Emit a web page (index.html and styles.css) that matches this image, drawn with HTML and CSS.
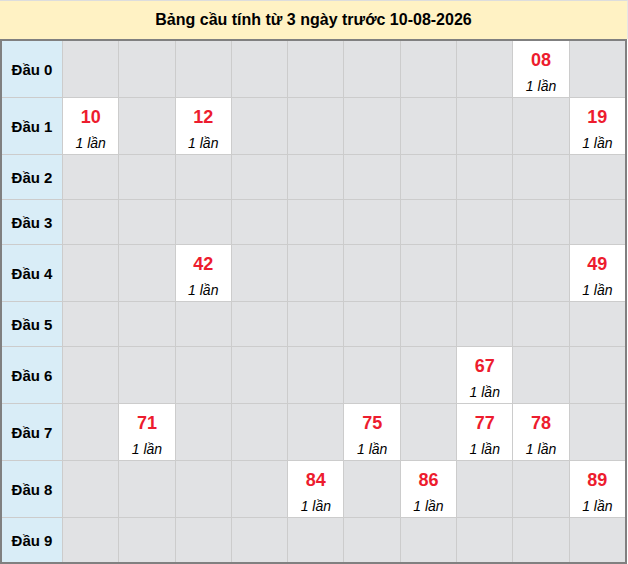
FILE: index.html
```html
<!DOCTYPE html>
<html lang="vi">
<head>
<meta charset="utf-8">
<title>Bảng cầu</title>
<link rel="stylesheet" href="styles.css">
</head>
<body>
<div class="header">Bảng cầu tính từ 3 ngày trước 10-08-2026</div>
<div class="grid">
  <div class="label tall">Đầu 0</div>
  <div class="c"></div><div class="c"></div><div class="c"></div><div class="c"></div><div class="c"></div><div class="c"></div><div class="c"></div><div class="c"></div>
  <div class="c hit"><span class="num">08</span><span class="cnt">1 lần</span></div>
  <div class="c"></div>

  <div class="label tall">Đầu 1</div>
  <div class="c hit"><span class="num">10</span><span class="cnt">1 lần</span></div>
  <div class="c"></div>
  <div class="c hit"><span class="num">12</span><span class="cnt">1 lần</span></div>
  <div class="c"></div><div class="c"></div><div class="c"></div><div class="c"></div><div class="c"></div><div class="c"></div>
  <div class="c hit"><span class="num">19</span><span class="cnt">1 lần</span></div>

  <div class="label short">Đầu 2</div>
  <div class="c"></div><div class="c"></div><div class="c"></div><div class="c"></div><div class="c"></div><div class="c"></div><div class="c"></div><div class="c"></div><div class="c"></div><div class="c"></div>

  <div class="label short">Đầu 3</div>
  <div class="c"></div><div class="c"></div><div class="c"></div><div class="c"></div><div class="c"></div><div class="c"></div><div class="c"></div><div class="c"></div><div class="c"></div><div class="c"></div>

  <div class="label tall">Đầu 4</div>
  <div class="c"></div><div class="c"></div>
  <div class="c hit"><span class="num">42</span><span class="cnt">1 lần</span></div>
  <div class="c"></div><div class="c"></div><div class="c"></div><div class="c"></div><div class="c"></div><div class="c"></div>
  <div class="c hit"><span class="num">49</span><span class="cnt">1 lần</span></div>

  <div class="label short">Đầu 5</div>
  <div class="c"></div><div class="c"></div><div class="c"></div><div class="c"></div><div class="c"></div><div class="c"></div><div class="c"></div><div class="c"></div><div class="c"></div><div class="c"></div>

  <div class="label tall">Đầu 6</div>
  <div class="c"></div><div class="c"></div><div class="c"></div><div class="c"></div><div class="c"></div><div class="c"></div><div class="c"></div>
  <div class="c hit"><span class="num">67</span><span class="cnt">1 lần</span></div>
  <div class="c"></div><div class="c"></div>

  <div class="label tall">Đầu 7</div>
  <div class="c"></div>
  <div class="c hit"><span class="num">71</span><span class="cnt">1 lần</span></div>
  <div class="c"></div><div class="c"></div><div class="c"></div>
  <div class="c hit"><span class="num">75</span><span class="cnt">1 lần</span></div>
  <div class="c"></div>
  <div class="c hit"><span class="num">77</span><span class="cnt">1 lần</span></div>
  <div class="c hit"><span class="num">78</span><span class="cnt">1 lần</span></div>
  <div class="c"></div>

  <div class="label tall">Đầu 8</div>
  <div class="c"></div><div class="c"></div><div class="c"></div><div class="c"></div>
  <div class="c hit"><span class="num">84</span><span class="cnt">1 lần</span></div>
  <div class="c"></div>
  <div class="c hit"><span class="num">86</span><span class="cnt">1 lần</span></div>
  <div class="c"></div><div class="c"></div>
  <div class="c hit"><span class="num">89</span><span class="cnt">1 lần</span></div>

  <div class="label short">Đầu 9</div>
  <div class="c"></div><div class="c"></div><div class="c"></div><div class="c"></div><div class="c"></div><div class="c"></div><div class="c"></div><div class="c"></div><div class="c"></div><div class="c"></div>
</div>
</body>
</html>
```
FILE: styles.css
```css
html, body {
  margin: 0;
  padding: 0;
  background: #ffffff;
}
body {
  font-family: "Liberation Sans", Arial, sans-serif;
  color: #000;
  width: 628px;
}
.header {
  height: 38px;
  border-top: 1px solid #dddddd;
  background: #fff2c4;
  font-weight: bold;
  font-size: 16px;
  line-height: 38px;
  text-align: center;
  width: 627px;
  border-right: 1px solid #e6e6e6;
}
.grid {
  width: 623px;
  border: 2px solid #808080;
  background: #cccccc;
  display: grid;
  grid-template-columns: 60px repeat(10, 1fr);
  grid-template-rows: 56px 56px 44px 44px 56px 44px 56px 56px 56px 44px;
  gap: 1px;
}
.label {
  background: #d9edf7;
  font-weight: bold;
  font-size: 15px;
  display: flex;
  align-items: center;
  justify-content: center;
}
.c {
  background: #e1e2e4;
}
.c.hit {
  background: #ffffff;
  display: flex;
  flex-direction: column;
  align-items: center;
  padding-top: 8px;
  box-sizing: border-box;
}
.num {
  color: #ed1c2e;
  font-weight: bold;
  font-size: 18px;
  line-height: 22px;
}
.cnt {
  font-style: italic;
  font-size: 14px;
  line-height: 20px;
  margin-top: 5px;
}
```
